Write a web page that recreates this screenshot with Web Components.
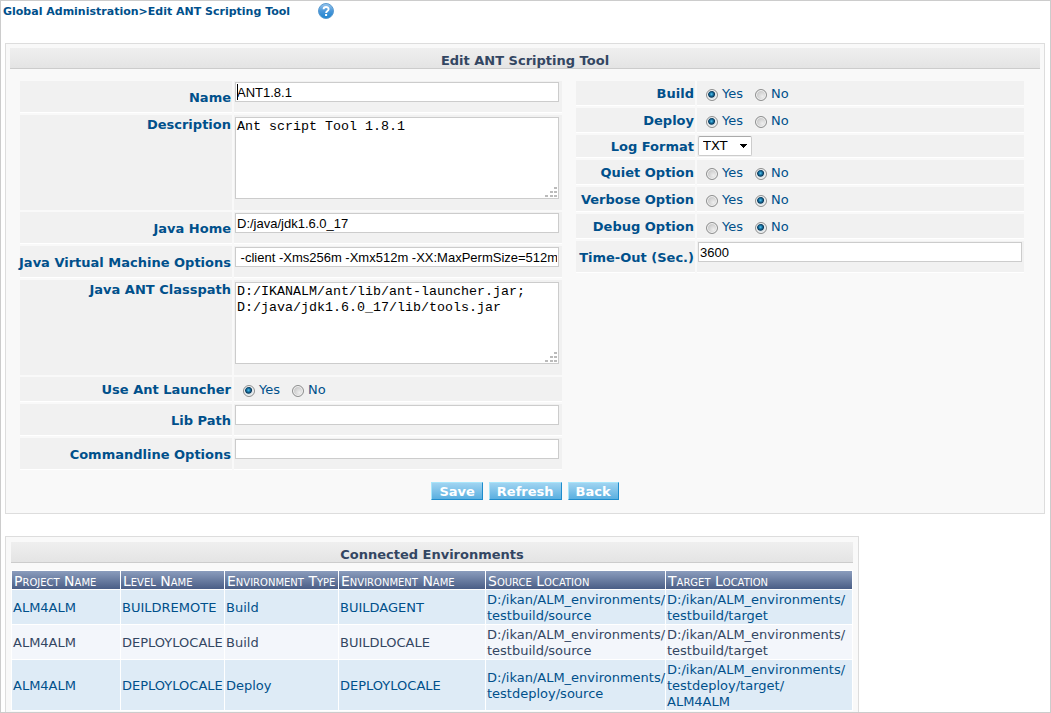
<!DOCTYPE html>
<html lang="en">
<head>
<meta charset="utf-8">
<title>Edit ANT Scripting Tool</title>
<style>
  body { margin: 0; background: #fff; font: 13px/16px Verdana, "DejaVu Sans", sans-serif; color: #00508b; }
</style>
</head>
<body>
<page-shell>
  <crumb-bar></crumb-bar>
  <panel-box heading="Edit ANT Scripting Tool">
    <tool-form></tool-form>
  </panel-box>
  <panel-box class="fit" heading="Connected Environments">
    <env-table></env-table>
  </panel-box>
</page-shell>

<script>
const define = (name, html, setup) => {
  const template = document.createElement('template');
  template.innerHTML = html;
  customElements.define(name, class extends HTMLElement {
    connectedCallback() {
      if (this.shadowRoot) return;
      this.attachShadow({ mode: 'open' }).append(template.content.cloneNode(true));
      if (setup) setup(this, this.shadowRoot);
    }
  });
};

define('page-shell', `
<style>
  :host { display: block; box-sizing: border-box; height: 100vh; overflow: hidden; border: 1px solid #ccc; }
  main { display: flex; flex-direction: column; gap: 20px; padding: 0 5px 0 4px; }
  ::slotted(.fit) { margin-top: 2px; }
</style>
<main><slot></slot></main>`);

define('crumb-bar', `
<style>
  :host { display: block; margin-left: -2px; font-size: 11px; font-weight: bold; }
  nav { display: flex; align-items: center; height: 22px; }
  a { color: inherit; text-decoration: none; }
  .help { margin: 0 0 2px 28px; height: 16px; }
  svg { display: block; }
</style>
<nav aria-label="Breadcrumb">
  <a href="#admin">Global Administration</a><span>&gt;</span><a href="#edit">Edit ANT Scripting Tool</a>
  <a class="help" href="#help" aria-label="Help">
    <svg width="16" height="16" viewBox="0 0 16 16">
      <defs><linearGradient id="g" x1="0" y1="0" x2="0" y2="1">
        <stop offset="0" stop-color="#9cc8ee"/><stop offset=".5" stop-color="#4a97da"/><stop offset="1" stop-color="#1c84cf"/>
      </linearGradient></defs>
      <circle cx="8" cy="8" r="7.5" fill="url(#g)" stroke="#5b9bd0"/>
      <path d="M5.6 6.2C5.6 3.2 10.6 3.2 10.6 6.2C10.6 8 8.1 8 8.1 10" fill="none" stroke="#fff" stroke-width="1.9"/>
      <rect x="7.1" y="11" width="2" height="2" fill="#fff"/>
    </svg>
  </a>
</nav>`);

define('panel-box', `
<style>
  :host { display: block; border: 1px solid #ddd; background: #f9f9f9; padding: 4px; }
  :host(.fit) { align-self: flex-start; padding: 5px; }
  h2 { margin: 0; height: 20px; border-bottom: 1px solid #ccc; text-align: center;
       font-size: 13px; line-height: 26px; color: #334662; background: linear-gradient(#efefef, #e4e4e4); }
</style>
<h2></h2>
<slot></slot>`, (host, root) => {
  root.querySelector('h2').textContent = host.getAttribute('heading');
});

define('field-row', `
<style>
  :host { display: grid; grid-template-columns: var(--label-width) 1fr; column-gap: 2px; }
  .cell { box-sizing: border-box; min-width: 0; min-height: 32px; background: #f1f1f1; border-bottom: 1px solid #fff; }
  .name { display: flex; align-items: center; justify-content: flex-end; padding: 2px 1px 0 0; font-weight: bold; white-space: nowrap; }
  .value { padding: 1px; }
  :host([kind=area]) .cell { min-height: 95px; border-bottom: 0; }
  :host([kind=area]) .name { align-items: flex-start; }
  :host([kind=area]) .value { padding-top: 2px; }
  :host([kind=choice]) .cell { min-height: 25px; }
  :host([kind=choice]) .value { display: flex; align-items: center; padding: 2px 0 0 9px; }
  :host([kind=select]) .cell { min-height: 23px; }
  input.text, textarea { display: block; box-sizing: border-box; width: 100%; max-width: 324px; margin: 0;
    border: 1px solid #ccc; border-radius: 0; background: #fff; color: #000; outline: 0; }
  input.text { height: 20px; padding: 0 1px; font-family: Arial, "Liberation Sans", sans-serif; font-size: 13px; }
  input.caret { background: linear-gradient(#000, #000) 1px 1px / 1px 16px no-repeat #fff; }
  textarea { height: 82px; padding: 1px; resize: none; overflow: hidden; line-height: 16px;
    font-family: "Courier New", "Liberation Mono", monospace;
    --dot: linear-gradient(#bbb, #bbb);
    background: var(--dot) right 1px bottom 1px / 3px 2px no-repeat, var(--dot) right 5px bottom 1px / 3px 2px no-repeat,
      var(--dot) right 10px bottom 1px / 3px 2px no-repeat, var(--dot) right 1px bottom 5px / 3px 2px no-repeat,
      var(--dot) right 5px bottom 5px / 3px 2px no-repeat, var(--dot) right 1px bottom 9px / 3px 2px no-repeat, #fff; }
  input[type=radio] { appearance: none; box-sizing: border-box; flex: none; width: 12px; height: 12px; margin: 2px 4px 0 0;
    border: 1px solid #8e8f8f; border-radius: 50%; background: radial-gradient(circle at 65% 65%, #eee, #ccc 60%); box-shadow: inset 0 0 0 1px #f4f4f4; }
  input[type=radio]:checked { background: radial-gradient(circle at 45% 42%, #5cc4ee 0, #1878a8 20%, #0b3a5c 38%, #dde4e8 50%); }
  .option { margin-right: 12px; }
  select { appearance: none; display: block; box-sizing: border-box; width: 54px; height: 20px; padding: 0 4px; border: 1px solid #ccc;
    border-top-color: #aaa; border-radius: 2px; font: inherit; color: #000;
    background: conic-gradient(from -45deg at 50% 100%, #000 90deg, transparent 0) right 4px center / 8px 4px no-repeat, #fff; }
</style>
<label class="cell name" for="control"></label>
<div class="cell value"></div>`, (host, root) => {
  const kind = host.getAttribute('kind');
  const name = host.getAttribute('name');
  const value = host.getAttribute('value') || '';
  const label = root.querySelector('label');
  const box = root.querySelector('.value');
  label.textContent = name;
  if (kind === 'choice') {
    box.setAttribute('role', 'radiogroup');
    box.setAttribute('aria-label', name);
    box.innerHTML = ['Yes', 'No'].map(text => {
      const id = text === value ? 'control' : 'other';
      return `<input type="radio" name="choice" id="${id}"${text === value ? ' checked' : ''}><label class="option" for="${id}">${text}</label>`;
    }).join('');
  } else if (kind === 'select') {
    box.innerHTML = `<select id="control"><option>${value}</option></select>`;
  } else {
    const field = document.createElement(kind === 'area' ? 'textarea' : 'input');
    field.id = 'control';
    if (kind !== 'area') { field.type = 'text'; field.className = 'text'; }
    if (host.hasAttribute('caret')) field.classList.add('caret');
    field.spellcheck = false;
    field.value = value;
    box.append(field);
  }
});

define('push-button', `
<style>
  :host { display: block; }
  button { display: block; box-sizing: border-box; height: 18px; margin: 0; padding: 1px 7px 0; border: 1px solid; border-radius: 0;
    border-color: #a8e6fb #1f8ccc #1f8ccc #a8e6fb; background: linear-gradient(#a0d4f1, #5aafe0);
    font: inherit; font-weight: bold; line-height: 16px; color: #fff; }
</style>
<button type="button"><slot></slot></button>`);

define('tool-form', `
<style>
  :host { display: block; padding: 12px 10px 9px; }
  .columns { display: flex; align-items: flex-start; gap: 14px; }
  .column { display: flex; flex-direction: column; gap: 2px; }
  .left { flex: 0 1 542px; --label-width: 212px; }
  .right { flex: 0 1 448px; --label-width: 119px; }
  .actions { display: flex; justify-content: center; gap: 6px; margin-top: 12px; }
</style>
<form>
  <div class="columns">
    <div class="column left">
      <field-row name="Name" value="ANT1.8.1" caret></field-row>
      <field-row kind="area" name="Description" value="Ant script Tool 1.8.1"></field-row>
      <field-row name="Java Home" value="D:/java/jdk1.6.0_17"></field-row>
      <field-row name="Java Virtual Machine Options" value=" -client -Xms256m -Xmx512m -XX:MaxPermSize=512m"></field-row>
      <field-row kind="area" name="Java ANT Classpath" value="D:/IKANALM/ant/lib/ant-launcher.jar;&#10;D:/java/jdk1.6.0_17/lib/tools.jar"></field-row>
      <field-row kind="choice" name="Use Ant Launcher" value="Yes"></field-row>
      <field-row name="Lib Path"></field-row>
      <field-row name="Commandline Options"></field-row>
    </div>
    <div class="column right">
      <field-row kind="choice" name="Build" value="Yes"></field-row>
      <field-row kind="choice" name="Deploy" value="Yes"></field-row>
      <field-row kind="select" name="Log Format" value="TXT"></field-row>
      <field-row kind="choice" name="Quiet Option" value="No"></field-row>
      <field-row kind="choice" name="Verbose Option" value="No"></field-row>
      <field-row kind="choice" name="Debug Option" value="No"></field-row>
      <field-row name="Time-Out (Sec.)" value="3600"></field-row>
    </div>
  </div>
  <div class="actions">
    <push-button>Save</push-button><push-button>Refresh</push-button><push-button>Back</push-button>
  </div>
</form>`);

define('env-table', `
<style>
  :host { display: block; padding-top: 7px; }
  table { table-layout: fixed; width: 842px; border-spacing: 1px; background: #fff; }
  th { height: 16px; padding: 2px 2px 0; font-size: 14px; font-weight: normal; font-variant: small-caps; text-align: left; white-space: nowrap;
    color: #fff; background: linear-gradient(#8b9dbd, #4a5e86); }
  td { padding: 2px 1px 0; vertical-align: middle; background: #deebf6; }
  tbody tr:nth-child(even) td { background: #f3f6fb; color: #334662; }
</style>
<table>
  <colgroup><col style="width:108px"><col style="width:103px"><col style="width:113px"><col style="width:146px"><col style="width:179px"><col></colgroup>
  <thead><tr><th>Project Name</th><th>Level Name</th><th>Environment Type</th><th>Environment Name</th><th>Source Location</th><th>Target Location</th></tr></thead>
  <tbody>
    <tr><td>ALM4ALM</td><td>BUILDREMOTE</td><td>Build</td><td>BUILDAGENT</td><td>D:/ikan/ALM_environments/<br>testbuild/source</td><td>D:/ikan/ALM_environments/<br>testbuild/target</td></tr>
    <tr><td>ALM4ALM</td><td>DEPLOYLOCALE</td><td>Build</td><td>BUILDLOCALE</td><td>D:/ikan/ALM_environments/<br>testbuild/source</td><td>D:/ikan/ALM_environments/<br>testbuild/target</td></tr>
    <tr><td>ALM4ALM</td><td>DEPLOYLOCALE</td><td>Deploy</td><td>DEPLOYLOCALE</td><td>D:/ikan/ALM_environments/<br>testdeploy/source</td><td>D:/ikan/ALM_environments/<br>testdeploy/target/<br>ALM4ALM</td></tr>
  </tbody>
</table>`);
</script>
</body>
</html>
